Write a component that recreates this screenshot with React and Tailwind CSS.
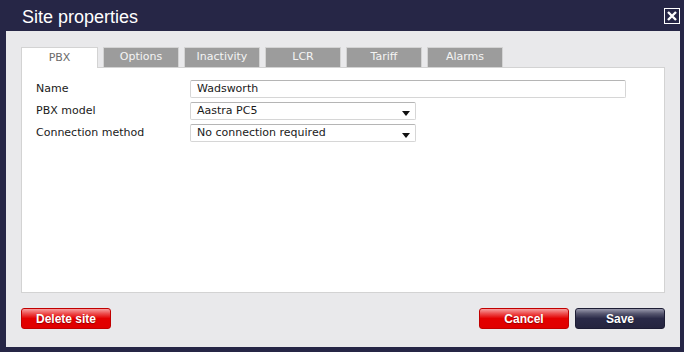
import React from "react";

const font = { fontFamily: '"DejaVu Sans", Verdana, sans-serif' };

function Tab({ label, active }) {
  if (active) {
    return (
      <div className="w-[77px] h-[21px] -mb-px bg-white border border-[#d3d3d3] border-b-0 flex items-center justify-center text-[11px] text-[#6b6b6b] relative z-10">
        {label}
      </div>
    );
  }
  return (
    <div className="w-[76px] h-[20px] mt-px bg-[#9c9c9c] border border-[#d3d3d3] border-b-0 flex items-center justify-center text-[11px] text-[#f4f4f4]">
      {label}
    </div>
  );
}

function Arrow() {
  return (
    <svg width="8" height="5" viewBox="0 0 8 5" className="absolute right-[5px] top-[8px]">
      <path d="M0 0h8L4 5z" fill="#111" />
    </svg>
  );
}

function Field({ children, w, select }) {
  return (
    <div
      className={`relative h-[18px] ${w} bg-white border border-[#d6d6d6] border-t-[#b5b5b5] rounded-[2px] flex items-center pl-[6px] text-[11px] text-[#1a1a1a]`}
    >
      {children}
      {select && <Arrow />}
    </div>
  );
}

function Btn({ children, variant, w = "w-[90px]" }) {
  const cls =
    variant === "red"
      ? "bg-[linear-gradient(#f7a0a0_0%,#ec4a4a_25%,#e30000_50%,#e00000_100%)] border-[#c10000]"
      : "bg-[linear-gradient(#9a9aae_0%,#55556e_25%,#2a2a48_50%,#25253f_100%)] border-[#1d1d35]";
  return (
    <div
      className={`${w} h-[21px] rounded-[3px] border ${cls} flex items-center justify-center text-white font-bold text-[12px] [text-shadow:0_1px_1px_rgba(0,0,0,0.35)]`}
      style={{ fontFamily: '"Liberation Sans", Arial, sans-serif' }}
    >
      {children}
    </div>
  );
}

export default function App() {
  return (
    <div className="w-[684px] h-[352px] bg-[#262646] flex flex-col" style={font}>
      <div className="h-[31px] shrink-0 flex items-center justify-between pl-[22px] pr-[4px]">
        <div className="text-white text-[18px] leading-none mt-[3px]" style={{ fontFamily: '"Liberation Sans", Arial, sans-serif' }}>
          Site properties
        </div>
        <div className="w-[16px] h-[16px] border border-white flex items-center justify-center mt-[1px]">
          <svg width="12" height="12" viewBox="0 0 12 12">
            <path d="M2 2L10 10M10 2L2 10" stroke="white" strokeWidth="2.4" />
          </svg>
        </div>
      </div>
      <div className="flex-1 ml-[6px] mr-[4px] mb-[5px] bg-[#e9e9eb] pt-[15px] pl-[15px] pr-[15px] flex flex-col">
        <div className="flex items-end gap-[5px] h-[21px]">
          <Tab label="PBX" active />
          <Tab label="Options" />
          <Tab label="Inactivity" />
          <Tab label="LCR" />
          <Tab label="Tariff" />
          <Tab label="Alarms" />
        </div>
        <div className="h-[226px] bg-white border border-[#d3d3d3] pt-[12px] pl-[14px] flex flex-col gap-[4px] text-[11px] text-[#1a1a1a]">
          <div className="flex items-center">
            <div className="w-[154px]">Name</div>
            <Field w="w-[436px]">Wadsworth</Field>
          </div>
          <div className="flex items-center">
            <div className="w-[154px]">PBX model</div>
            <Field w="w-[226px]" select>Aastra PC5</Field>
          </div>
          <div className="flex items-center">
            <div className="w-[154px]">Connection method</div>
            <Field w="w-[226px]" select>No connection required</Field>
          </div>
        </div>
        <div className="flex items-center justify-between mt-[15px]">
          <Btn variant="red">Delete site</Btn>
          <div className="flex gap-[6px]">
            <Btn variant="red">Cancel</Btn>
            <Btn variant="navy">Save</Btn>
          </div>
        </div>
      </div>
    </div>
  );
}
